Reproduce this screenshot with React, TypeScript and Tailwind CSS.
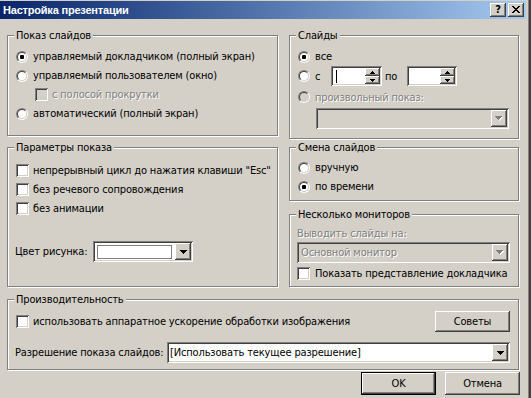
import React from 'react';

// классический стиль Windows: рельеф через inset-тени
const sunken =
  'shadow-[inset_1px_1px_#808080,inset_-1px_-1px_#fff,inset_2px_2px_#404040,inset_-2px_-2px_#d4d0c8]';
const raised =
  'shadow-[inset_-1px_-1px_#404040,inset_1px_1px_#fff,inset_-2px_-2px_#808080,inset_2px_2px_#d4d0c8]';
const disabledText = 'text-[#808080] [text-shadow:1px_1px_0_#fff]';

function Radio({ checked, disabled }: { checked?: boolean; disabled?: boolean }) {
  return (
    <span className="block w-[12px] h-[12px] shrink-0 rounded-full border border-t-[#808080] border-l-[#808080] border-r-white border-b-white">
      <span
        className={`flex w-full h-full items-center justify-center rounded-full border border-t-[#404040] border-l-[#404040] border-r-[#d4d0c8] border-b-[#d4d0c8] ${
          disabled ? 'bg-[#d4d0c8]' : 'bg-white'
        }`}
      >
        {checked && <span className="block w-[4px] h-[4px] rounded-[1px] bg-black" />}
      </span>
    </span>
  );
}

function Checkbox({ disabled }: { disabled?: boolean }) {
  return (
    <span
      className={`block w-[13px] h-[13px] shrink-0 ${sunken} ${disabled ? 'bg-[#d4d0c8]' : 'bg-white'}`}
    />
  );
}

function DownArrow({ disabled }: { disabled?: boolean }) {
  const d = 'M0 0h7v1H0z M1 1h5v1H1z M2 2h3v1H2z M3 3h1v1H3z';
  if (disabled) {
    return (
      <svg width="8" height="5" viewBox="0 0 8 5">
        <path d={d} fill="#fff" transform="translate(1 1)" />
        <path d={d} fill="#808080" />
      </svg>
    );
  }
  return (
    <svg width="7" height="4" viewBox="0 0 7 4">
      <path d={d} fill="#000" />
    </svg>
  );
}

function Combo({
  className,
  disabled,
  children,
}: {
  className: string;
  disabled?: boolean;
  children?: React.ReactNode;
}) {
  return (
    <div className={`flex h-[21px] p-[2px] ${sunken} ${disabled ? 'bg-[#d4d0c8]' : 'bg-white'} ${className}`}>
      <div className="flex flex-1 min-w-0 items-center pl-[1px] whitespace-nowrap">{children}</div>
      <div className={`flex w-[16px] h-full items-center justify-center bg-[#d4d0c8] ${raised}`}>
        <DownArrow disabled={disabled} />
      </div>
    </div>
  );
}

function Spin({ className, caret }: { className: string; caret?: boolean }) {
  return (
    <div className={`flex h-[20px] p-[2px] bg-white ${sunken} ${className}`}>
      <div className="flex flex-1 items-center pl-[3px]">
        {caret && <span className="block w-[1px] h-[13px] bg-black" />}
      </div>
      <div className="flex flex-col w-[15px]">
        <div className={`flex flex-1 items-center justify-center bg-[#d4d0c8] ${raised}`}>
          <svg width="5" height="3" viewBox="0 0 5 3">
            <path d="M2 0h1v1H2z M1 1h3v1H1z M0 2h5v1H0z" fill="#000" />
          </svg>
        </div>
        <div className={`flex flex-1 items-center justify-center bg-[#d4d0c8] ${raised}`}>
          <svg width="5" height="3" viewBox="0 0 5 3">
            <path d="M0 0h5v1H0z M1 1h3v1H1z M2 2h1v1H2z" fill="#000" />
          </svg>
        </div>
      </div>
    </div>
  );
}

function Group({
  title,
  className,
  children,
}: {
  title: string;
  className: string;
  children: React.ReactNode;
}) {
  return (
    <div
      className={`border border-[#808080] shadow-[inset_1px_1px_#fff,1px_1px_#fff] ${className}`}
    >
      <div className="-mt-[7px] mb-[-6px] ml-[6px] w-fit px-[2px] bg-[#d4d0c8] leading-[13px] whitespace-nowrap">
        {title}
      </div>
      {children}
    </div>
  );
}

function Row({
  children,
  className = 'h-[19px]',
}: {
  children: React.ReactNode;
  className?: string;
}) {
  return <div className={`flex items-center whitespace-nowrap ${className}`}>{children}</div>;
}

function Button({ label, isDefault, className }: { label: string; isDefault?: boolean; className: string }) {
  if (isDefault) {
    return (
      <div className={`border border-black ${className}`}>
        <div className={`flex h-full items-center justify-center ${raised}`}>{label}</div>
      </div>
    );
  }
  return <div className={`flex items-center justify-center ${raised} ${className}`}>{label}</div>;
}

function TitleBar() {
  return (
    <div className="flex w-[526px] h-[18px] items-center justify-between pl-[3px] pr-[2px] bg-gradient-to-r from-[#0a246a] to-[#a6caf0]">
      <span className="font-bold text-white text-[11px] tracking-[-0.2px] font-['Liberation_Sans',sans-serif]">
        Настройка презентации
      </span>
      <div className="flex gap-[2px]">
        <div className={`flex w-[16px] h-[14px] items-center justify-center bg-[#d4d0c8] ${raised}`}>
          <span className="font-bold leading-[12px] text-[11px] -mt-[1px]">?</span>
        </div>
        <div className={`flex w-[16px] h-[14px] items-center justify-center bg-[#d4d0c8] ${raised}`}>
          <svg width="8" height="7" viewBox="0 0 8 7" className="-mt-[1px]">
            <path
              d="M0 0h2v1H0z M6 0h2v1H6z M1 1h2v1H1z M5 1h2v1H5z M2 2h4v1H2z M3 3h2v1H3z M2 4h4v1H2z M1 5h2v1H1z M5 5h2v1H5z M0 6h2v1H0z M6 6h2v1H6z"
              fill="#000"
            />
          </svg>
        </div>
      </div>
    </div>
  );
}

export default function App() {
  return (
    <div className="flex w-[531px] h-[398px] overflow-hidden bg-[#d4d0c8] text-black text-[11px] leading-[13px] tracking-[-0.15px] font-['DejaVu_Sans_Condensed','DejaVu_Sans',sans-serif]">
      <div className="flex flex-col w-[528px] shrink-0 pt-[1px]">
        <TitleBar />

        <div className="flex gap-[11px] pl-[7px] pt-[16px]">
          {/* левая колонка */}
          <div className="flex flex-col w-[271px]">
            <Group title="Показ слайдов" className="h-[101px]">
              <div className="pt-[11px] pl-[8px]">
                <Row>
                  <Radio checked />
                  <span className="ml-[5px]">управляемый докладчиком (полный экран)</span>
                </Row>
                <Row>
                  <Radio />
                  <span className="ml-[5px]">управляемый пользователем (окно)</span>
                </Row>
                <Row className="h-[19px] pl-[19px]">
                  <Checkbox disabled />
                  <span className={`ml-[4px] ${disabledText}`}>с полосой прокрутки</span>
                </Row>
                <Row>
                  <Radio />
                  <span className="ml-[5px]">автоматический (полный экран)</span>
                </Row>
              </div>
            </Group>

            <Group title="Параметры показа" className="h-[140px] mt-[11px]">
              <div className="pt-[13px] pl-[8px]">
                <Row>
                  <Checkbox />
                  <span className="ml-[4px]">непрерывный цикл до нажатия клавиши "Esc"</span>
                </Row>
                <Row>
                  <Checkbox />
                  <span className="ml-[4px]">без речевого сопровождения</span>
                </Row>
                <Row>
                  <Checkbox />
                  <span className="ml-[4px]">без анимации</span>
                </Row>
              </div>
              <div className="flex items-center mt-[23px] pl-[7px]">
                <span className="w-[78px]">Цвет рисунка:</span>
                <Combo className="w-[100px]">
                  <span className="block w-[75px] h-[14px] ml-[1px] border border-[#808080] bg-white" />
                </Combo>
              </div>
            </Group>
          </div>

          {/* правая колонка */}
          <div className="flex flex-col w-[230px]">
            <Group title="Слайды" className="h-[104px]">
              <div className="pt-[11px] pl-[8px]">
                <Row>
                  <Radio checked />
                  <span className="ml-[5px]">все</span>
                </Row>
                <Row className="h-[20px]">
                  <Radio />
                  <span className="ml-[5px] w-[16px]">с</span>
                  <Spin className="w-[51px]" caret />
                  <span className="w-[25px] pl-[3px]">по</span>
                  <Spin className="w-[50px]" />
                </Row>
                <Row className="h-[20px] mt-[1px]">
                  <Radio disabled />
                  <span className={`ml-[5px] ${disabledText}`}>произвольный показ:</span>
                </Row>
                <Combo disabled className="w-[193px] ml-[18px] mt-[1px]" />
              </div>
            </Group>

            <Group title="Смена слайдов" className="h-[54px] mt-[8px]">
              <div className="pt-[10px] pl-[8px]">
                <Row>
                  <Radio />
                  <span className="ml-[5px]">вручную</span>
                </Row>
                <Row>
                  <Radio checked />
                  <span className="ml-[5px]">по времени</span>
                </Row>
              </div>
            </Group>

            <Group title="Несколько мониторов" className="h-[73px] mt-[13px]">
              <div className="pt-[11px] pl-[7px]">
                <Row className="h-[14px]">
                  <span className={disabledText}>Выводить слайды на:</span>
                </Row>
                <Combo disabled className="w-[213px] mt-[2px]">
                  <span className={`pl-[1px] ${disabledText}`}>Основной монитор</span>
                </Combo>
                <Row className="h-[19px] mt-[1px]">
                  <Checkbox />
                  <span className="ml-[5px]">Показать представление докладчика</span>
                </Row>
              </div>
            </Group>
          </div>
        </div>

        <div className="pl-[7px] mt-[12px]">
          <Group title="Производительность" className="w-[512px] h-[71px]">
            <div className="flex items-center justify-between h-[21px] mt-[11px] pl-[8px] pr-[8px]">
              <div className="flex items-center">
                <Checkbox />
                <span className="ml-[4px]">использовать аппаратное ускорение обработки изображения</span>
              </div>
              <Button label="Советы" className="w-[75px] h-[21px]" />
            </div>
            <div className="flex items-center mt-[10px] pl-[7px]">
              <span className="w-[152px] whitespace-nowrap">Разрешение показа слайдов:</span>
              <Combo className="w-[343px]">
                <span>[Использовать текущее разрешение]</span>
              </Combo>
            </div>
          </Group>
        </div>

        <div className="flex justify-end gap-[9px] pr-[8px] mt-[2px]">
          <Button label="OK" isDefault className="w-[75px] h-[23px]" />
          <Button label="Отмена" className="w-[75px] h-[23px]" />
        </div>
      </div>

      {/* правая рамка окна */}
      <div className="w-[1px] h-full bg-[#808080]" />
      <div className="w-[2px] h-full bg-[#404040]" />
    </div>
  );
}
